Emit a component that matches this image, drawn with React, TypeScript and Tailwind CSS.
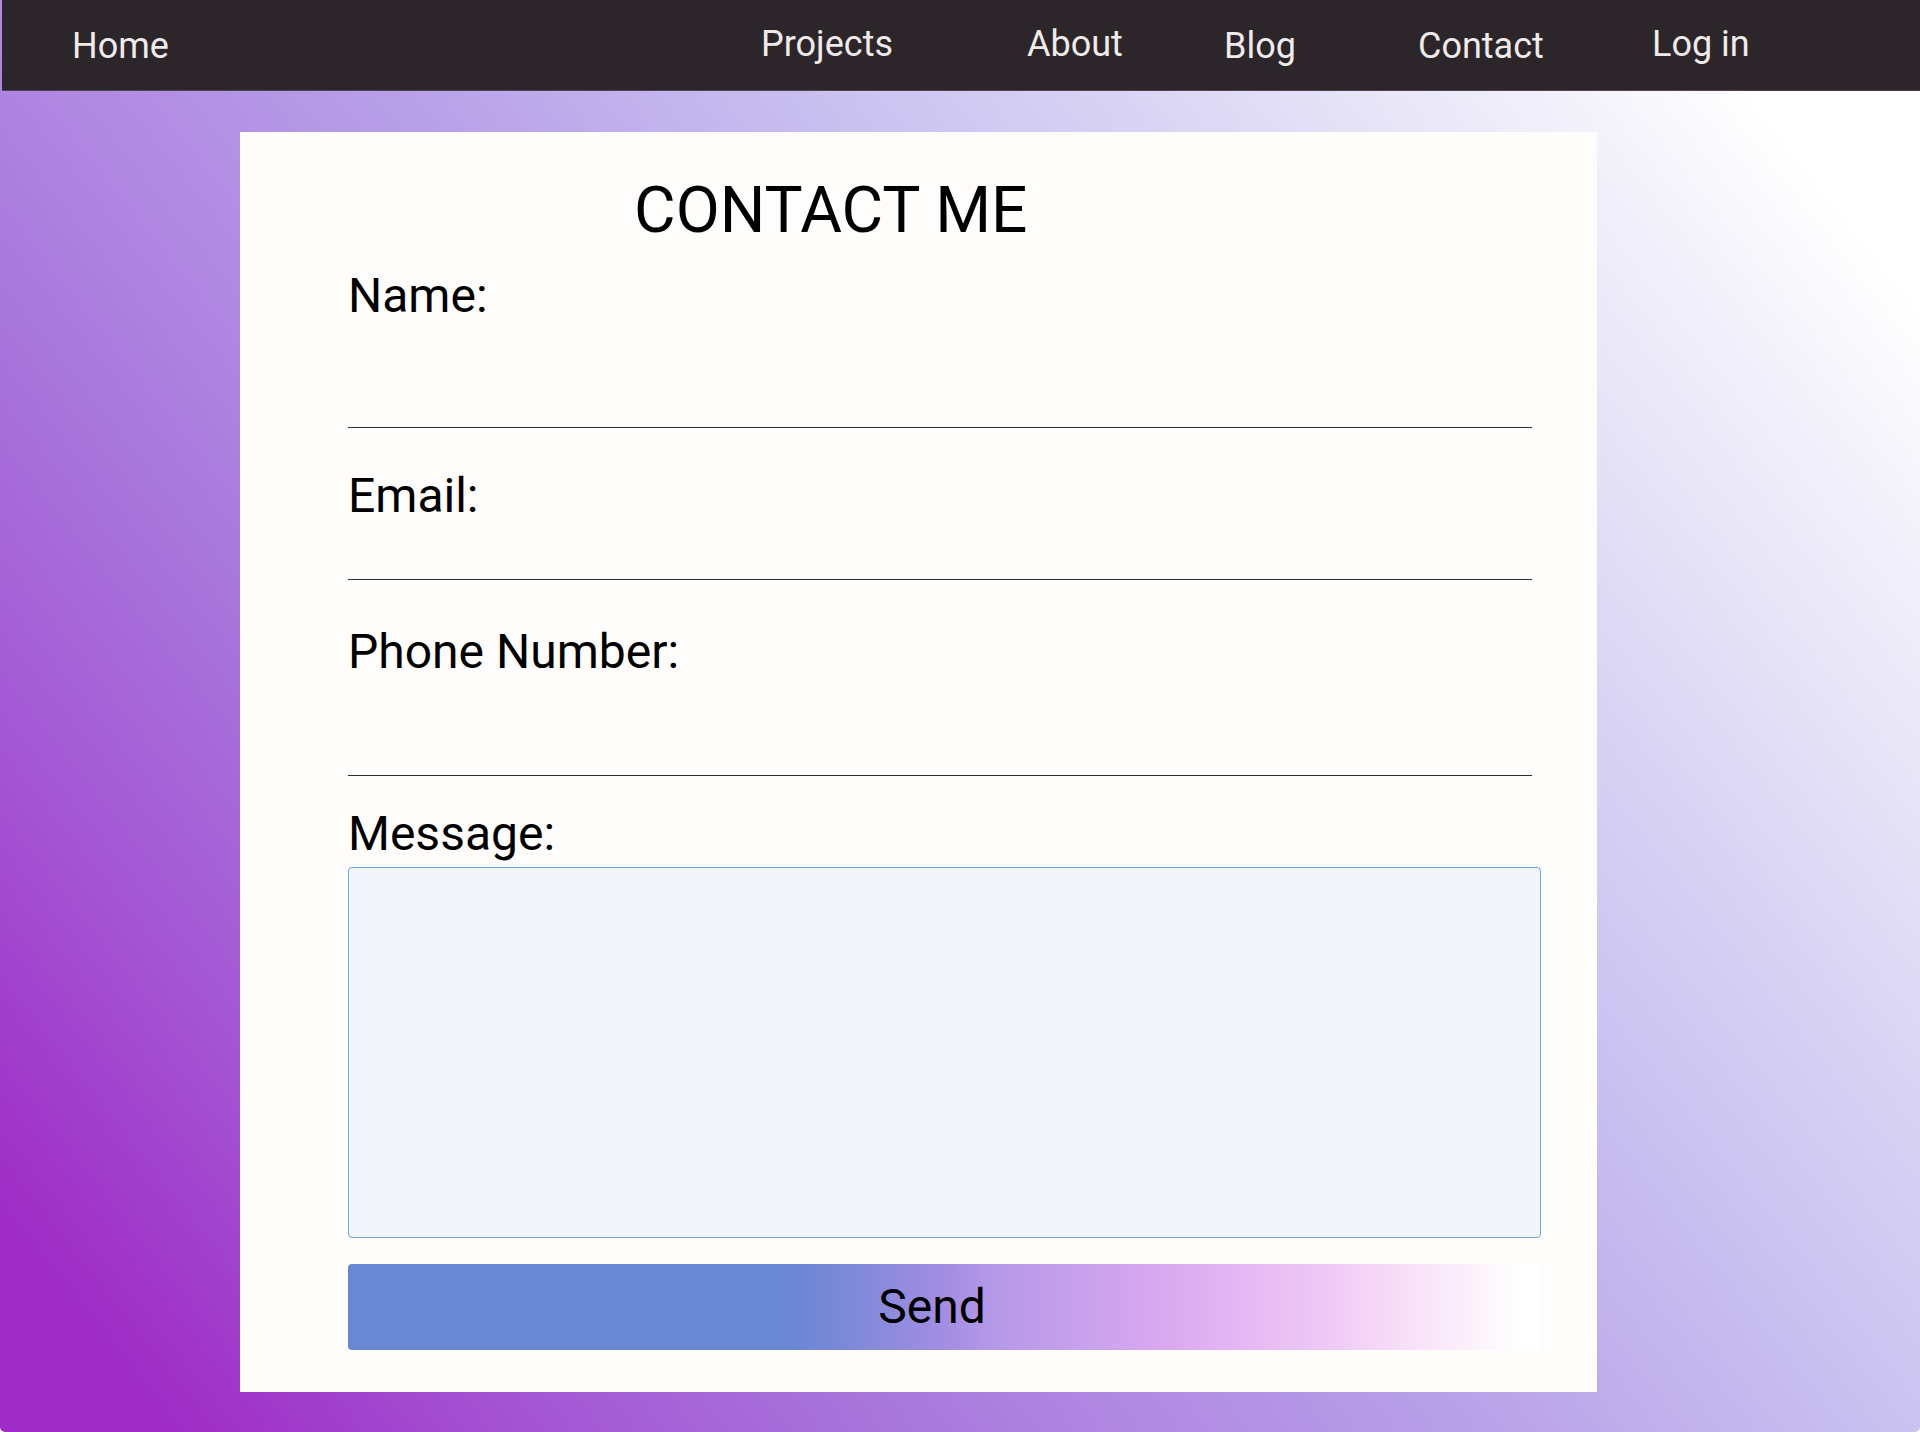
import React from 'react';

const links = [
  { label: 'Home', width: 'w-[689px]', top: 'pt-[25px]' },
  { label: 'Projects', width: 'w-[266px]', top: 'pt-[23px]' },
  { label: 'About', width: 'w-[197px]', top: 'pt-[23px]' },
  { label: 'Blog', width: 'w-[194px]', top: 'pt-[25px]' },
  { label: 'Contact', width: 'w-[234px]', top: 'pt-[25px]' },
  { label: 'Log in', width: 'w-[200px]', top: 'pt-[23px]' },
];

function NavBar() {
  return (
    <nav className="ml-[2px] h-[91px] bg-[#2c2529] border-b border-[#4f4550] flex items-start pl-[70px] text-[36px] leading-[43px] text-[#efebeb]">
      {links.map((link) => (
        <a key={link.label} href="#" className={`${link.width} ${link.top} block`}>
          {link.label}
        </a>
      ))}
    </nav>
  );
}

function Field({ label, labelGap, inputHeight }: { label: string; labelGap: string; inputHeight: string }) {
  return (
    <div>
      <label className={`block ${labelGap} text-[48px] leading-[56px]`}>{label}</label>
      <input
        type="text"
        className={`block w-[1184px] ${inputHeight} bg-transparent border-b border-[#2e2e2e] outline-none`}
      />
    </div>
  );
}

export default function App() {
  return (
    <div className="min-h-screen bg-white font-['Roboto',sans-serif] text-black">
      <div className="h-[1432px] rounded-b-[5px] bg-[linear-gradient(51.5deg,#9f2cc6_0%,#9f2dc6_6%,#a456d4_18%,#a878dc_30%,#af86e2_36%,#b8a0e8_48%,#c8bff0_61%,#d8d3f4_71%,#e6e4f7_79%,#f3f2fb_86%,#ffffff_92%)]">
        <NavBar />

        <main className="pt-[41px] pl-[240px]">
          {/* Contact card */}
          <div className="w-[1357px] h-[1260px] bg-[#fefdfb] pt-[47px] pl-[108px]">
            <h1 className="ml-[286px] text-[64px] leading-[64px] font-normal">CONTACT ME</h1>

            <form>
              <Field label="Name:" labelGap="mt-[25px]" inputHeight="h-[104px]" />
              <Field label="Email:" labelGap="mt-[40px]" inputHeight="h-[56px]" />
              <Field label="Phone Number:" labelGap="mt-[44px]" inputHeight="h-[96px]" />

              <label className="block mt-[30px] text-[48px] leading-[56px]">Message:</label>
              <textarea className="block mt-[5px] w-[1193px] h-[371px] bg-[#f3f5fb] border-[1.5px] border-[#68a8dc] rounded-[4px] outline-none resize-none" />

              <button
                type="button"
                className="mt-[26px] w-[1192px] h-[86px] rounded-l-[4px] flex items-center justify-center text-[48px] leading-[56px] bg-[linear-gradient(to_right,#6a87d4_0%,#6a87d4_37.5%,#a28de2_50%,#b598e8_54%,#d8a8f0_68%,#f0c8f6_82%,#f8e0f8_89%,#ffffff_98.5%)]"
              >
                <span className="pr-[24px]">Send</span>
              </button>
            </form>
          </div>
        </main>
      </div>
    </div>
  );
}
